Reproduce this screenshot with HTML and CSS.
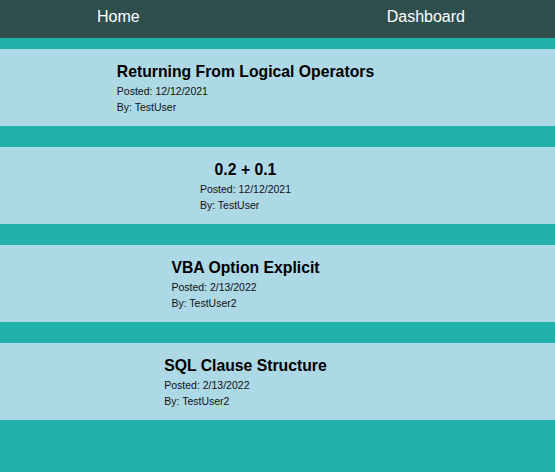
FILE: index.html
```html
<!DOCTYPE html>
<html>
<head>
<meta charset="utf-8">
<link rel="stylesheet" href="styles.css">
</head>
<body>
<nav class="nav">
  <a class="nav-link" href="#">Home</a>
  <a class="nav-link" href="#">Dashboard</a>
</nav>
<main class="posts">
  <article class="post">
    <div class="post-body">
      <h2 class="post-title">Returning From Logical Operators</h2>
      <p class="post-meta">Posted: 12/12/2021</p>
      <p class="post-meta">By: TestUser</p>
    </div>
  </article>
  <article class="post">
    <div class="post-body">
      <h2 class="post-title">0.2 + 0.1</h2>
      <p class="post-meta">Posted: 12/12/2021</p>
      <p class="post-meta">By: TestUser</p>
    </div>
  </article>
  <article class="post">
    <div class="post-body">
      <h2 class="post-title">VBA Option Explicit</h2>
      <p class="post-meta">Posted: 2/13/2022</p>
      <p class="post-meta">By: TestUser2</p>
    </div>
  </article>
  <article class="post">
    <div class="post-body">
      <h2 class="post-title">SQL Clause Structure</h2>
      <p class="post-meta">Posted: 2/13/2022</p>
      <p class="post-meta">By: TestUser2</p>
    </div>
  </article>
</main>
</body>
</html>
```
FILE: styles.css
```css
html, body {
  margin: 0;
  padding: 0;
}
body {
  background: #20b2aa;
  font-family: "Liberation Sans", Arial, sans-serif;
  color: #000;
  min-height: 472px;
}
.nav {
  background: #2f4f4f;
  height: 38px;
  display: flex;
  justify-content: space-between;
  align-items: center;
  padding: 0 90px 5px 97px;
  box-sizing: border-box;
}
.nav-link {
  color: #fff;
  text-decoration: none;
  font-size: 16px;
}
.posts {
  display: flex;
  flex-direction: column;
  gap: 21px;
  padding-top: 11px;
}
.post {
  background: #add8e6;
  height: 77px;
  display: flex;
  justify-content: center;
  padding-right: 64px;
  box-sizing: border-box;
}
.post-body {
  padding-top: 13px;
}
.post-title {
  margin: 0 0 2px;
  font-size: 15.75px;
  font-weight: bold;
  text-align: center;
  line-height: 19px;
}
.post-meta {
  margin: 0;
  font-size: 10.5px;
  line-height: 16px;
  color: #111;
}
```
